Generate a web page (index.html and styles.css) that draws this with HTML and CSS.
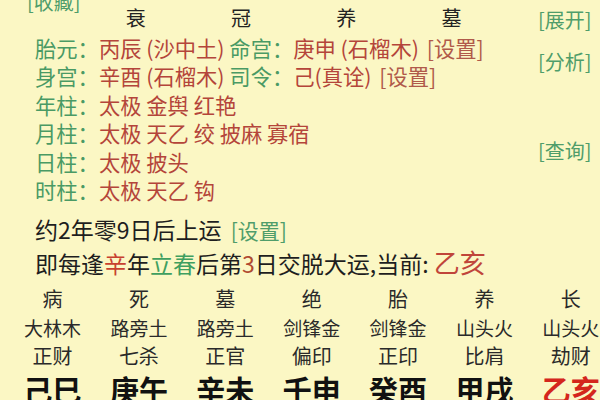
FILE: index.html
```html
<!DOCTYPE html>
<html lang="zh-CN">
<head>
<meta charset="utf-8">
<title>排盘</title>
<link rel="stylesheet" href="styles.css">
</head>
<body>
<div class="page">
  <div class="upper">
    <div class="left">
      <div class="fav link">[收藏]</div>
      <div class="head"><span>衰</span><span>冠</span><span>养</span><span>墓</span></div>
      <div class="lines">
        <div class="line"><span class="g">胎元：</span><span class="r">丙辰 (沙中土)</span> <span class="g">命宫：</span><span class="r">庚申 (石榴木)</span> <span class="s">[设置]</span></div>
        <div class="line"><span class="g">身宫：</span><span class="r">辛酉 (石榴木)</span> <span class="g">司令：</span><span class="r">己(真诠)</span> <span class="s">[设置]</span></div>
        <div class="line"><span class="g">年柱：</span><span class="r">太极 金舆 红艳</span></div>
        <div class="line"><span class="g">月柱：</span><span class="r">太极 天乙 绞 披麻 寡宿</span></div>
        <div class="line"><span class="g">日柱：</span><span class="r">太极 披头</span></div>
        <div class="line"><span class="g">时柱：</span><span class="r">太极 天乙 钩</span></div>
      </div>
    </div>
    <div class="right">
      <div class="link btn-open">[展开]</div>
      <div class="link btn-ana">[分析]</div>
      <div class="link btn-query">[查询]</div>
    </div>
  </div>
  <div class="yun">
    <div class="l7">约2年零9日后上运 <span class="set link">[设置]</span></div>
    <div class="l8">即每逢<span class="xin">辛</span>年<span class="lc">立春</span>后第<span class="n3">3</span>日交脱大运,当前: <span class="cur">乙亥</span></div>
  </div>
  <div class="grid">
    <div class="brow r1"><span>病</span><span>死</span><span>墓</span><span>绝</span><span>胎</span><span>养</span><span>长</span></div>
    <div class="brow r2"><span>大林木</span><span>路旁土</span><span>路旁土</span><span>剑锋金</span><span>剑锋金</span><span>山头火</span><span>山头火</span></div>
    <div class="brow r3"><span>正财</span><span>七杀</span><span>正官</span><span>偏印</span><span>正印</span><span>比肩</span><span>劫财</span></div>
    <div class="brow r4"><span>己巳</span><span>庚午</span><span>辛未</span><span>壬申</span><span>癸酉</span><span>甲戌</span><span class="now">乙亥</span></div>
  </div>
</div>
</body>
</html>
```
FILE: styles.css
```css
html, body {
  margin: 0;
  padding: 0;
  background: #fbf7c4;
  overflow: hidden;
}
body {
  font-family: "Noto Sans CJK SC", "Noto Sans", sans-serif;
  color: #222;
}
.page {
  width: 600px;
  height: 400px;
  overflow: hidden;
  display: flex;
  flex-direction: column;
}
.link { color: #4f9d6a; }
.upper {
  display: flex;
  margin-top: -8px;
}
.left { flex: 1; display: flex; flex-direction: column; }
.fav {
  height: 16px;
  line-height: 20px;
  font-size: 20px;
  padding-left: 27px;
  white-space: nowrap;
}
.head {
  height: 20px;
  line-height: 20px;
  font-size: 20px;
  padding-left: 83px;
  display: grid;
  grid-template-columns: repeat(4, 105.3px);
  text-align: center;
  color: #222;
}
.lines {
  margin-top: 5.5px;
  padding-left: 35px;
}
.line {
  font-size: 21.3px;
  line-height: 28.6px;
  white-space: nowrap;
}
.g { color: #4a9a64; }
.r { color: #b4453a; }
.s { color: #b05a4a; margin-left: 3px; }
.right {
  width: 52px;
  padding-right: 10px;
  display: flex;
  flex-direction: column;
  font-size: 20px;
  line-height: 24px;
  white-space: nowrap;
}
.btn-open { margin-top: 16px; }
.btn-ana { margin-top: 18px; }
.btn-query { margin-top: 65px; }
.yun {
  margin-top: 9px;
  padding-left: 35px;
  white-space: nowrap;
  color: #1e1e1e;
}
.l7 {
  font-size: 23px;
  line-height: 30px;
}
.set { font-size: 21px; margin-left: 4px; }
.l8 {
  font-size: 23px;
  line-height: 34px;
}
.xin { color: #c8412f; }
.lc { color: #3f9f60; }
.n3 { color: #b04a30; }
.cur { color: #c0453a; font-size: 26px; }
.grid {
  margin-top: 4px;
  padding-left: 9.3px;
  color: #2a2a2a;
}
.brow {
  display: grid;
  grid-template-columns: repeat(7, 86.4px);
  text-align: center;
  white-space: nowrap;
}
.r1 { font-size: 20px; line-height: 29px; }
.r2 { font-size: 19px; line-height: 30px; }
.r3 { font-size: 20px; line-height: 25px; }
.r4 { font-size: 29px; line-height: 42px; font-weight: bold; color: #111; }
.now { color: #d4261c; }
```
